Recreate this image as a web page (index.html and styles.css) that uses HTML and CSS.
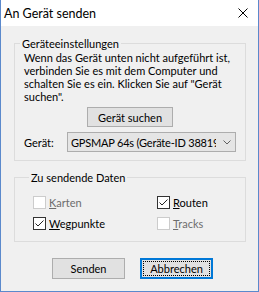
FILE: index.html
```html
<!DOCTYPE html>
<html lang="de">
<head>
<meta charset="utf-8">
<title>An Gerät senden</title>
<link rel="stylesheet" href="styles.css">
</head>
<body>
<div class="window">
  <div class="titlebar">
    <span class="title">An Gerät senden</span>
    <svg class="close" width="10" height="10" viewBox="0 0 10 10"><path d="M0.5 0.5 L9.5 9.5 M9.5 0.5 L0.5 9.5" stroke="#000" stroke-width="1" fill="none"/></svg>
  </div>
  <div class="content">
    <fieldset class="group group-device">
      <legend>Geräteeinstellungen</legend>
      <p class="info">Wenn das Gerät unten nicht aufgeführt ist,<br>verbinden Sie es mit dem Computer und<br>schalten Sie es ein. Klicken Sie auf "Gerät<br>suchen".</p>
      <div class="search-row"><button class="btn btn-search" type="button">Gerät suchen</button></div>
      <div class="device-row">
        <span class="device-label">Gerät:</span>
        <div class="combo">
          <span class="combo-text">GPSMAP 64s (Geräte-ID 38819</span>
          <svg class="chevron" width="8" height="5" viewBox="0 0 8 5"><path d="M0.5 0.5 L4 4 L7.5 0.5" stroke="#606060" stroke-width="1" fill="none"/></svg>
        </div>
      </div>
    </fieldset>
    <fieldset class="group group-data">
      <legend>Zu sendende Daten</legend>
      <div class="checks">
        <label class="check disabled"><span class="box"></span><span class="check-label"><u>K</u>arten</span></label>
        <label class="check"><span class="box"><svg width="11" height="11" viewBox="0 0 11 11"><path d="M1.5 5.5 L4 8 L9.5 2.5" stroke="#222" stroke-width="1" fill="none"/></svg></span><span class="check-label"><u>R</u>outen</span></label>
        <label class="check"><span class="box"><svg width="11" height="11" viewBox="0 0 11 11"><path d="M1.5 5.5 L4 8 L9.5 2.5" stroke="#222" stroke-width="1" fill="none"/></svg></span><span class="check-label"><u>W</u>egpunkte</span></label>
        <label class="check disabled"><span class="box"></span><span class="check-label"><u>T</u>racks</span></label>
      </div>
    </fieldset>
    <div class="actions">
      <button class="btn" type="button">Senden</button>
      <button class="btn btn-default" type="button"><span class="focus-ring">Abbrechen</span></button>
    </div>
  </div>
</div>
</body>
</html>
```
FILE: styles.css
```css
html, body {
  margin: 0;
  padding: 0;
  background: #f0f0f0;
}
body {
  font-family: Lato, "Noto Sans", sans-serif;
  font-size: 11px;
  color: #000;
}
.window {
  width: 259px;
  height: 292px;
  box-sizing: border-box;
  border: 1px solid #5b89cc;
  border-top: none;
  background: #f0f0f0;
  display: flex;
  flex-direction: column;
}
.titlebar {
  flex: none;
  height: 26px;
  background: #fff;
  display: flex;
  align-items: center;
  justify-content: space-between;
  padding: 0 10px 0 3px;
}
.title {
  font-size: 12.5px;
}
.close {
  display: block;
}
.content {
  flex: 1;
  padding: 11px 12px 0 13px;
  display: flex;
  flex-direction: column;
}
.group {
  margin: 0;
  border: 1px solid #dcdcdc;
  min-width: 0;
}
.group legend {
  padding: 0 2px;
  margin-left: -4px;
  line-height: 13px;
}
.group-device {
  padding: 1px 9px 8px 9px;
}
.info {
  margin: 0;
  line-height: 13px;
  white-space: nowrap;
}
.search-row {
  display: flex;
  justify-content: center;
  margin-top: 4px;
}
.btn {
  font: inherit;
  color: #000;
  background: #e1e1e1;
  border: 1px solid #adadad;
  margin: 0;
  padding: 0;
  height: 21px;
  width: 73px;
  display: flex;
  align-items: center;
  justify-content: center;
  box-sizing: border-box;
}
.btn-search {
  width: 86px;
  height: 20px;
}
.device-row {
  display: flex;
  align-items: center;
  margin-top: 5px;
}
.device-label {
  width: 43px;
  flex: none;
}
.combo {
  width: 169px;
  height: 20px;
  box-sizing: border-box;
  border: 1px solid #adadad;
  background: #e5e5e5;
  display: flex;
  align-items: center;
  padding-left: 3px;
}
.combo-text {
  width: 145px;
  overflow: hidden;
  white-space: nowrap;
  letter-spacing: -0.2px;
  flex: none;
}
.chevron {
  display: block;
  margin-left: 7px;
}
.group-data {
  margin-top: 10px;
  padding: 10px 9px 9px 18px;
}
.checks {
  display: grid;
  grid-template-columns: 124px 1fr;
  row-gap: 4px;
}
.check {
  display: flex;
  align-items: center;
  height: 17px;
  line-height: 17px;
}
.box {
  width: 13px;
  height: 13px;
  box-sizing: border-box;
  border: 1px solid #333;
  background: #fff;
  flex: none;
  margin-right: 3px;
}
.box svg {
  display: block;
}
.check.disabled .box {
  border-color: #cccccc;
}
.check.disabled .check-label {
  color: #6d6d6d;
}
.check-label u {
  text-decoration-thickness: 1px;
  text-underline-offset: 1px;
}
.actions {
  display: flex;
  gap: 15px;
  margin-top: 16px;
  padding-left: 38px;
}
.btn-default {
  border: 2px solid #0078d7;
  padding: 1px;
}
.focus-ring {
  display: flex;
  align-items: center;
  justify-content: center;
  width: 100%;
  height: 100%;
  box-sizing: border-box;
  border: 1px dotted #000;
}
```
